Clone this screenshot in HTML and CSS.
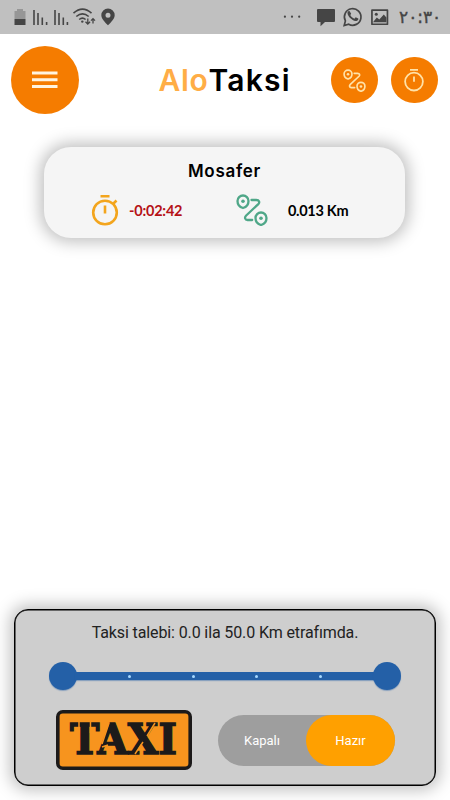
FILE: index.html
```html
<!DOCTYPE html>
<html lang="tr">
<head>
    <meta charset="UTF-8">
    <meta name="viewport" content="width=device-width, initial-scale=1.0">
    <title>AloTaksi</title>
    <link rel="stylesheet" href="styles.css">
</head>
<body>

    <svg class="symbols">
        <symbol id="route" viewBox="0 0 32 32">
            <g fill="none" stroke="currentColor" stroke-width="2.3" stroke-linecap="round" stroke-linejoin="round">
                <path d="M7 14C3.4 13 1.5 9.8 1.5 7a5.5 5.5 0 0 1 11 0c0 2.8-1.9 6-5.5 7z"/>
                <path d="M25 31c-3.6-1-5.5-4.2-5.5-7a5.5 5.5 0 0 1 11 0c0 2.8-1.9 6-5.5 7z"/>
                <path d="M15.5 6h4.8c3 0 3.7 2.4 2 4.1L10.2 21.5c-2 2-1.2 4.5 1.3 4.5h4.7"/>
            </g>
            <circle cx="7" cy="7.3" r="1.8" fill="currentColor"/>
            <circle cx="25" cy="24.3" r="1.8" fill="currentColor"/>
        </symbol>
    </svg>

    <!-- status bar -->
    <div class="status">
        <svg class="status-left" width="120" height="34" viewBox="0 0 120 34">
            <path d="M17 9h6v2h2.5v8h-11v-8H17z" fill="#969696"/>
            <path d="M14.5 19h11v6h-11z" fill="#454545"/>
            <path d="M34 10v15M38 13v12M42.3 17.5V25M46.6 22v3M55 10v15M59 13v12M63.3 17.5V25M67.4 22v3" stroke="#454545" stroke-width="1.6"/>
            <g fill="none" stroke="#454545" stroke-width="1.6">
                <path d="M73.5 13.2q9-8 18 0M76.3 16.5q6.2-5.4 12.4 0M79.2 19.5q3.2-2.6 6.4 0"/>
                <path d="M87.8 18.5v5M85.5 21.7l2.3 2.3 2.3-2.3M93 23.5v-4.7M91 20.6l2-2 2 2" stroke-width="1.3"/>
            </g>
            <circle cx="82.3" cy="21.6" r="1.2" fill="#454545"/>
            <path fill="#454545" fill-rule="evenodd" d="M108 8.5a6.7 6.7 0 0 0-6.7 6.7c0 4.3 6.7 10 6.7 10s6.7-5.7 6.7-10A6.7 6.7 0 0 0 108 8.5zm0 4.2a2.5 2.5 0 1 1 0 5 2.5 2.5 0 0 1 0-5z"/>
        </svg>
        <svg class="status-right" width="110" height="34" viewBox="280 0 110 34">
            <g fill="#454545">
                <circle cx="284.9" cy="16.7" r="1.1"/><circle cx="292" cy="16.7" r="1.1"/><circle cx="299.2" cy="16.7" r="1.1"/>
                <path d="M318 9h16q1 0 1 1v11q0 1-1 1h-9l-4.5 4.3V22H318q-1 0-1-1V10q0-1 1-1z"/>
                <path d="M349.8 11.6c-.5-.7-1.2-.6-1.8 0-2.5 2.6 4.2 10.3 8.5 9.4 1.6-.5 2.2-1.8 1.8-2.4l-2.6-1.3-1.3 1.4c-1.7-.5-3.4-2.2-4.1-3.7l.9-1.3z"/>
                <path fill-rule="evenodd" d="M372 9.3h15.4q.9 0 .9.9v14q0 .9-.9.9H372q-.9 0-.9-.9v-14q0-.9.9-.9zm.8 1.7v12.4h13.8V11z"/>
                <path d="M373 22.2l3.8-4.6 2.5 2 4.5-5 2.6 3v4.6z"/><circle cx="376.3" cy="14.2" r="1.5"/>
            </g>
            <path d="M344.2 25.5l1.2-4.6a8.3 8.3 0 1 1 3.3 3.3z" fill="none" stroke="#454545" stroke-width="1.7"/>
        </svg>
        <span class="clock">۲۰:۳۰</span>
    </div>

    <!-- header -->
    <div class="header">
        <button class="menu">
            <svg width="26" height="18" viewBox="0 0 26 18"><path d="M0 2h25.5M0 8.8h25.5M0 15.6h25.5" stroke="#fff4df" stroke-width="3"/></svg>
        </button>
        <h1><span>Alo</span>Taksi</h1>
        <button class="round"><svg width="23" height="23"><use href="#route"/></svg></button>
        <button class="round">
            <svg width="22" height="24" viewBox="0 0 22 24" fill="none" stroke="currentColor" stroke-width="1.8">
                <circle cx="11" cy="13.6" r="8.9"/><path d="M7 1.8h8M11 8.5v5.2"/>
            </svg>
        </button>
    </div>

    <!-- passenger card -->
    <div class="card">
        <h2>Mosafer</h2>
        <div class="info">
            <svg class="watch" width="28" height="32" viewBox="0 0 28 32" fill="none" stroke="#f3a51d" stroke-width="2.6">
                <circle cx="14" cy="18.5" r="11.8"/><path d="M9.5 2.3h9M14 11.5v8M22.5 9.5l3-3"/>
            </svg>
            <span class="time">-0:02:42</span>
            <svg class="way" width="32" height="32"><use href="#route"/></svg>
            <span class="km">0.013 Km</span>
        </div>
    </div>

    <!-- request panel -->
    <div class="panel">
        <p>Taksi talebi: 0.0 ila 50.0 Km etrafımda.</p>
        <div class="slider">
            <span class="knob"></span>
            <div class="track"><i></i><i></i><i></i><i></i></div>
            <span class="knob"></span>
        </div>
        <div class="bottom">
            <svg class="taxi" width="136" height="60" viewBox="0 0 136 60">
                <rect x="1.8" y="1.8" width="132.4" height="56.4" rx="5" fill="#f7941e" stroke="#1c1a1a" stroke-width="3.6"/>
                <text class="plate" x="14" y="44.3" textLength="107" lengthAdjust="spacingAndGlyphs">TAXI</text>
                <!-- stencil gaps -->
                <path d="M23 11v12M34.5 11v12M53 13l-7 21M46 37l6-2M79 44l8-12M91 26l8-13" stroke="#f7941e" stroke-width="1.5"/>
            </svg>
            <div class="toggle">
                <span>Kapalı</span>
                <span class="on">Hazır</span>
            </div>
        </div>
    </div>

</body>
</html>
```
FILE: styles.css
```css
* {
    box-sizing: border-box;
}

body {
    display: flex;
    flex-direction: column;
    height: 800px;
    margin: 0;
    overflow: hidden;
    background-color: #fff;
    font-family: Roboto, sans-serif;
}

svg {
    display: block;
    flex: none;
}

.symbols {
    display: none;
}

.status {
    display: flex;
    align-items: center;
    height: 34px;
    background-color: #c0c0c0;
    color: #454545;
}

.status-right {
    margin-left: 160px;
}

.clock {
    margin-left: 9px;
    font-family: "DejaVu Sans", sans-serif;
    font-size: 17px;
    letter-spacing: -2.2px;
    line-height: 34px;
    -webkit-text-stroke: 0.4px #454545;
}

.header {
    display: flex;
    align-items: center;
    height: 92px;
    padding: 0 12px 0 11px;
}

button {
    display: flex;
    flex: none;
    align-items: center;
    justify-content: center;
    padding: 0;
    border: none;
    border-radius: 50%;
    background-color: #f57c00;
    color: #ffe2a8;
}

.menu {
    width: 68px;
    height: 68px;
}

.round {
    width: 46.5px;
    height: 46.5px;
    margin-left: 13.5px;
}

h1 {
    width: 172.5px;
    margin: 0 0 0 79.5px;
    font-family: Inter, sans-serif;
    font-size: 30px;
    font-weight: 600;
    letter-spacing: 1.2px;
    white-space: nowrap;
}

h1 + .round {
    margin-left: 0;
}

h1 span {
    letter-spacing: 0.7px;
    color: #ffad46;
}

.card {
    height: 91px;
    margin: 21px 45px 0 44px;
    padding-top: 12px;
    border-radius: 27px;
    background-color: #f5f5f5;
    box-shadow: 0 0 16px 4px rgba(0, 0, 0, 0.25);
}

h2 {
    margin: 0;
    font-family: Inter, sans-serif;
    font-size: 17px;
    font-weight: 600;
    letter-spacing: 0.7px;
    line-height: 24px;
    text-align: center;
}

.info {
    display: flex;
    align-items: center;
    height: 32px;
    margin-top: 11px;
    padding-left: 47px;
    font-family: Lato, sans-serif;
    font-size: 14.5px;
    font-weight: bold;
}

.time {
    width: 107px;
    margin-left: 10px;
    color: #b51217;
    letter-spacing: -0.2px;
}

.way {
    color: #4fa788;
}

.km {
    margin-left: 20px;
    letter-spacing: -0.3px;
}

.panel {
    height: 177px;
    margin: auto 14px 14px;
    border: 1px solid #000;
    border-radius: 14px;
    background-color: #cecece;
    box-shadow: 0 0 16px 4px rgba(0, 0, 0, 0.25), inset 0 0 0 0.5px #000;
}

.panel p {
    margin: 12px 0 0;
    color: #222;
    font-size: 16px;
    letter-spacing: -0.12px;
    line-height: 22px;
    text-align: center;
}

.slider {
    display: flex;
    align-items: center;
    height: 28px;
    margin: 18px 34px 0;
}

.knob {
    flex: none;
    width: 28px;
    height: 28px;
    border-radius: 50%;
    background-color: #2460a7;
    box-shadow: 0 1px 1px rgba(36, 96, 167, 0.4);
}

.track {
    display: flex;
    flex: 1;
    align-items: center;
    justify-content: space-between;
    height: 8px;
    margin: 0 -2px;
    padding: 0 53px;
    background-color: #2460a7;
    box-shadow: 0 1px 1px rgba(36, 96, 167, 0.4);
}

.track i {
    width: 3px;
    height: 3px;
    border-radius: 50%;
    background-color: #a6d8ff;
}

.bottom {
    display: flex;
    align-items: center;
    margin: 20px 0 0 41px;
}

.plate {
    fill: #1c1a1a;
    stroke: #1c1a1a;
    stroke-width: 1.6;
    font-family: "DejaVu Serif", serif;
    font-size: 43px;
    font-weight: bold;
}

.toggle {
    display: flex;
    width: 177px;
    height: 51px;
    margin-left: 26px;
    border-radius: 26px;
    background-color: #9e9e9e;
    color: #fff;
    font-size: 13px;
    line-height: 51px;
    text-align: center;
}

.toggle span {
    width: 88px;
}

.toggle .on {
    width: 89px;
    border-radius: 26px;
    background-color: #ffa000;
}
```
